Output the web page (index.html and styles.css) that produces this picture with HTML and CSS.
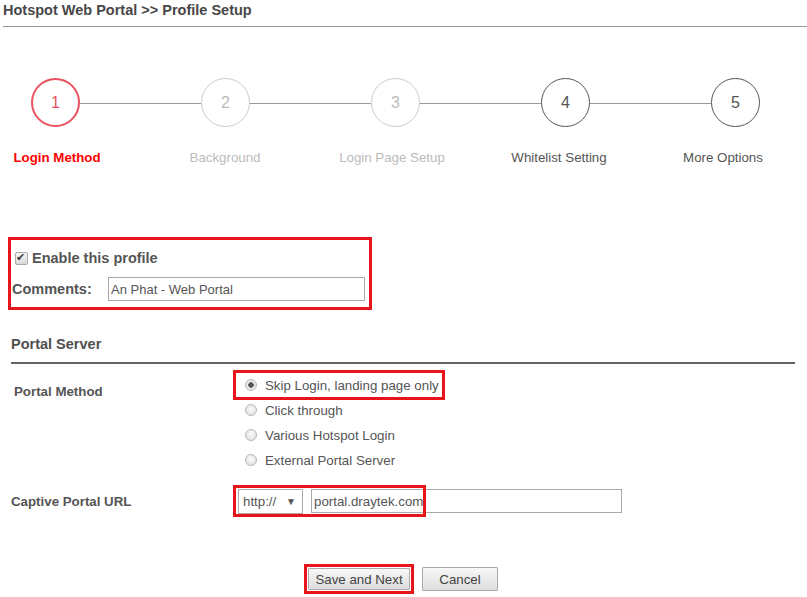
FILE: index.html
```html
<!DOCTYPE html>
<html lang="en">
<head>
    <meta charset="UTF-8">
    <meta name="viewport" content="width=device-width, initial-scale=1.0">
    <title>Hotspot Web Portal</title>
    <link rel="stylesheet" href="styles.css">
</head>
<body>
    <div id="header">Hotspot Web Portal &gt;&gt; Profile Setup</div>

    <div id="steps">
        <div class="circles">
            <span class="circle current">1</span>
            <span class="bar"></span>
            <span class="circle off">2</span>
            <span class="bar"></span>
            <span class="circle off">3</span>
            <span class="bar"></span>
            <span class="circle">4</span>
            <span class="bar"></span>
            <span class="circle">5</span>
        </div>
        <div class="labels">
            <span class="step-name current">Login Method</span>
            <span class="step-name off">Background</span>
            <span class="step-name off">Login Page Setup</span>
            <span class="step-name">Whitelist Setting</span>
            <span class="step-name">More Options</span>
        </div>
    </div>

    <div class="mark" id="profile">
        <label class="enable"><input type="checkbox" checked>Enable this profile</label>
        <div class="comment-row">
            <span class="comment-label">Comments:</span>
            <input type="text" class="comment" value="An Phat - Web Portal">
        </div>
    </div>

    <div id="section-title">Portal Server</div>

    <div class="form-row" id="method-row">
        <div class="form-label">Portal Method</div>
        <div class="options">
            <label class="opt mark"><input type="radio" name="method" checked>Skip Login, landing page only</label>
            <label class="opt"><input type="radio" name="method">Click through</label>
            <label class="opt"><input type="radio" name="method">Various Hotspot Login</label>
            <label class="opt"><input type="radio" name="method">External Portal Server</label>
        </div>
    </div>

    <div class="form-row" id="url-row">
        <div class="form-label">Captive Portal URL</div>
        <div class="url-group">
            <div class="select"><span>http://</span><span class="arrow">&#9660;</span></div>
            <input type="text" class="url" value="portal.draytek.com">
            <span class="mark-overlay"></span>
        </div>
    </div>

    <div id="btn-container">
        <span class="mark btn-mark"><button class="btn" id="save">Save and Next</button></span>
        <button class="btn" id="cancel">Cancel</button>
    </div>
</body>
</html>
```

FILE: styles.css
```css
body {
    margin: 0;
    font-family: "Liberation Sans", Arial, sans-serif;
    font-size: 13.3px;
    color: #555;
    background-color: white;
}

#header {
    margin-left: 3px;
    padding-top: 1px;
    height: 25px;
    line-height: 18px;
    font-size: 14.5px;
    font-weight: bold;
    color: #474747;
    border-bottom: 1px solid #999;
}

/* wizard steps */

#steps {
    margin-top: 51px;
}

.circles {
    display: flex;
    align-items: center;
    margin-left: 31px;
}

.circle {
    box-sizing: border-box;
    width: 49px;
    height: 49px;
    border: 1px solid #555;
    border-radius: 50%;
    display: flex;
    justify-content: center;
    align-items: center;
    font-size: 16px;
    color: #555;
}

.circle.current {
    border: 2px solid #e9525f;
    color: #e9525f;
}

.circle.off {
    border-color: #ccc;
    color: #bbb;
}

.bar {
    width: 121px;
    height: 1px;
    margin-top: 1px;
    background-color: #999;
}

.labels {
    display: grid;
    grid-template-columns: 114px 222px 112px 222px 106px;
    margin-top: 23px;
    line-height: 16px;
    text-align: center;
    white-space: nowrap;
}

.step-name.current {
    color: red;
    font-weight: bold;
}

.step-name.off {
    color: #bbb;
}

/* red annotation boxes */

.mark {
    border: 3px solid #e8141c;
}

/* profile */

#profile {
    box-sizing: border-box;
    width: 364px;
    margin: 71px 0 0 8px;
    padding: 9px 0 6px 0;
}

.enable {
    display: flex;
    align-items: center;
    height: 18px;
    font-size: 14.5px;
    font-weight: bold;
}

.enable input {
    appearance: none;
    -webkit-appearance: none;
    position: relative;
    width: 13px;
    height: 13px;
    margin: 0 4px 0 4px;
    border: 1px solid #aaa;
    border-radius: 2px;
    background: linear-gradient(#f6f6f6, #d9d9d9);
}

.enable input:checked::after {
    content: "\2714";
    position: absolute;
    left: 0;
    top: -2px;
    font-family: "DejaVu Sans", sans-serif;
    font-size: 11px;
    color: #3c3c3c;
}

.comment-row {
    display: flex;
    align-items: center;
    margin-top: 10px;
}

.comment-label {
    width: 96px;
    padding-left: 1px;
    font-size: 14.5px;
    font-weight: bold;
}

.comment {
    box-sizing: border-box;
    width: 257px;
    height: 24px;
    margin: 0;
    padding: 0 2px;
    border: 1px solid #aaa;
    font-family: inherit;
    font-size: 13px;
    color: #555;
}

/* portal server */

#section-title {
    width: 784px;
    margin: 25px 0 0 11px;
    padding-bottom: 9px;
    line-height: 18px;
    font-size: 14.5px;
    font-weight: bold;
    color: #4f4f4f;
    border-bottom: 2px solid #666;
}

.form-row {
    display: flex;
    margin-left: 11px;
}

.form-label {
    width: 222px;
    font-weight: bold;
    line-height: 16px;
}

#method-row {
    margin-top: 6px;
}

#method-row .form-label {
    padding: 14px 0 0 3px;
    width: 219px;
}

.options {
    display: flex;
    flex-direction: column;
}

.opt {
    display: flex;
    align-items: center;
    height: 25px;
    padding-left: 12px;
}

.opt.mark {
    height: 24px;
    margin-bottom: -2.5px;
    padding: 0 3px 0 9px;
}

.opt input {
    appearance: none;
    -webkit-appearance: none;
    width: 12px;
    height: 12px;
    margin: 0 8px 0 0;
    border: 1px solid #b8b8b8;
    border-radius: 50%;
    background: radial-gradient(circle at 50% 40%, #fbfbfb, #dadada);
}

.opt input:checked {
    background: radial-gradient(circle, #555 0, #555 2.5px, #eee 3px, #d8d8d8);
}

#url-row {
    margin-top: 16.5px;
    align-items: center;
}

.url-group {
    position: relative;
    display: flex;
    align-items: flex-start;
    padding-left: 5px;
}

.select {
    box-sizing: border-box;
    display: flex;
    justify-content: space-between;
    align-items: center;
    width: 65px;
    height: 25px;
    padding: 0 6px 0 4px;
    border: 1px solid #aaa;
    color: #555;
}

.arrow {
    font-size: 10px;
    color: #555;
}

.url {
    box-sizing: border-box;
    width: 311px;
    height: 24px;
    margin: 0 0 0 8px;
    padding: 0 2px;
    border: 1px solid #aaa;
    font-family: inherit;
    font-size: 13.3px;
    color: #555;
}

.mark-overlay {
    position: absolute;
    left: 0;
    top: -4px;
    width: 193px;
    height: 32px;
    box-sizing: border-box;
    border: 3px solid #e8141c;
}

/* buttons */

#btn-container {
    display: flex;
    align-items: center;
    margin: 50px 0 0 304px;
}

.btn-mark {
    padding: 1px;
}

.btn {
    box-sizing: border-box;
    height: 22px;
    margin: 0;
    border: 1px solid #aaa;
    border-radius: 1px;
    background: linear-gradient(#f8f8f8, #dddddd);
    font-family: inherit;
    font-size: 13.3px;
    color: #444;
    cursor: pointer;
}

#save {
    display: block;
    width: 102px;
}

#cancel {
    width: 76px;
    height: 24px;
    margin-left: 8px;
}
```
